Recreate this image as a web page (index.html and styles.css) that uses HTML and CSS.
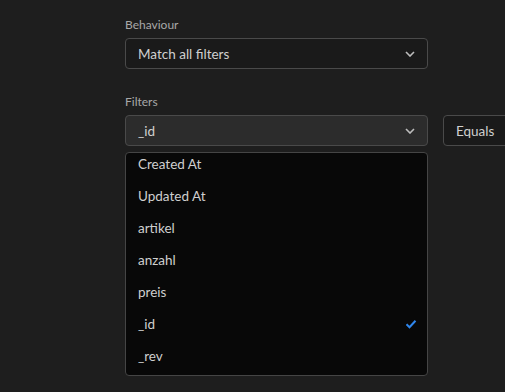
FILE: index.html
```html
<!DOCTYPE html>
<html lang="en">
<head>
    <meta charset="UTF-8">
    <meta name="viewport" content="width=device-width, initial-scale=1.0">
    <title>Filter settings</title>
    <link rel="stylesheet" href="styles.css">
</head>
<body>
    <div class="panel">
        <div class="field">
            <label class="field-label">Behaviour</label>
            <div class="select">
                <span class="select-value">Match all filters</span>
                <svg class="chevron" width="10" height="6" viewBox="0 0 10 6"><path d="M1 1l4 4 4-4" fill="none" stroke="currentColor" stroke-width="1.6"/></svg>
            </div>
        </div>

        <div class="field filters">
            <label class="field-label">Filters</label>
            <div class="filter-row">
                <div class="field-picker">
                    <div class="select open">
                        <span class="select-value">_id</span>
                        <svg class="chevron" width="10" height="6" viewBox="0 0 10 6"><path d="M1 1l4 4 4-4" fill="none" stroke="currentColor" stroke-width="1.6"/></svg>
                    </div>
                    <div class="menu">
                        <ul class="options">
                            <li>Created At</li>
                            <li>Updated At</li>
                            <li>artikel</li>
                            <li>anzahl</li>
                            <li>preis</li>
                            <li class="selected">_id
                                <svg class="check" width="12" height="10" viewBox="0 0 12 10"><path d="M1.5 5.2l3 3 6-6.5" fill="none" stroke="currentColor" stroke-width="2"/></svg>
                            </li>
                            <li>_rev</li>
                        </ul>
                    </div>
                </div>
                <div class="select operator">
                    <span class="select-value">Equals</span>
                </div>
            </div>
        </div>
    </div>
</body>
</html>
```

FILE: styles.css
```css
body {
    margin: 0;
    background-color: #1e1e1e;
    font-family: "Lato", "Noto Sans", sans-serif;
    color: #d0d0d0;
    overflow: hidden;
}
.panel {
    padding: 17px 0 0 125px;
}
.field-label {
    display: block;
    font-size: 12px;
    line-height: 16px;
    color: #a8a8a8;
    margin-bottom: 5px;
}
.filters {
    margin-top: 25px;
}
.select {
    box-sizing: border-box;
    width: 303px;
    height: 31px;
    display: flex;
    align-items: center;
    justify-content: space-between;
    padding: 0 12px;
    background-color: #1a1a1a;
    border: 1px solid #4a4a4a;
    border-radius: 4px;
    font-size: 13.5px;
}
.select.open {
    background-color: #2c2c2c;
}
.chevron {
    color: #bdbdbd;
}
.filter-row {
    display: flex;
    gap: 15px;
    align-items: flex-start;
    overflow: hidden;
}
.operator {
    width: 80px;
    flex-shrink: 0;
}
.menu {
    box-sizing: border-box;
    width: 303px;
    height: 224px;
    margin-top: 6px;
    background-color: #080808;
    border: 1px solid #454545;
    border-radius: 4px;
    overflow: hidden;
}
.options {
    list-style: none;
    margin: -5px 0 0 0;
    padding: 0;
}
.options li {
    display: flex;
    align-items: center;
    justify-content: space-between;
    height: 32px;
    padding: 0 10px 0 12px;
    font-size: 13.5px;
    color: #cfcfcf;
}
.check {
    color: #2f86ec;
}
```
